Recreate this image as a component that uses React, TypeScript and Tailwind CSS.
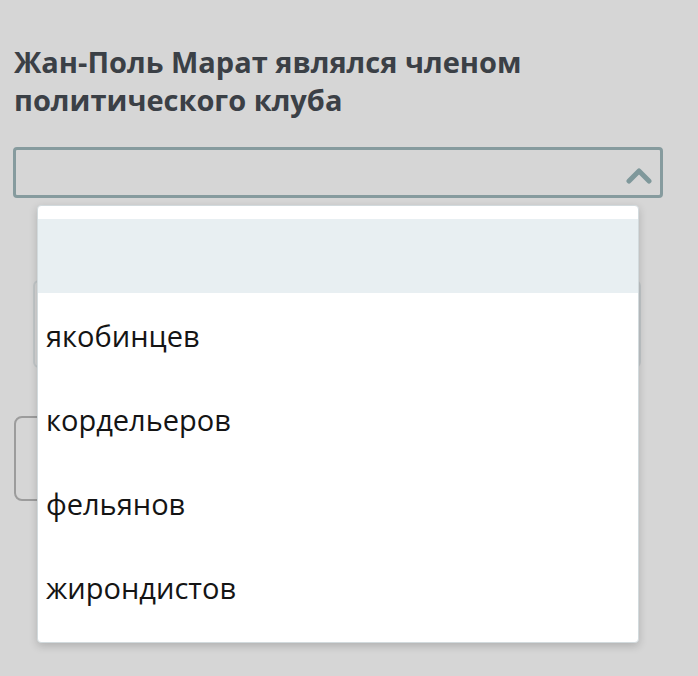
import { useState } from "react";

const OPTIONS = ["", "якобинцев", "кордельеров", "фельянов", "жирондистов"];

function ChevronUp() {
  return (
    <svg width="26" height="18" viewBox="0 0 26 18" className="block">
      <path
        d="M3 15 L13 5 L23 15"
        fill="none"
        stroke="#7f989b"
        strokeWidth="5"
        strokeLinecap="round"
        strokeLinejoin="round"
      />
    </svg>
  );
}

export default function App() {
  const [selected] = useState(0);

  return (
    <div
      className="min-h-[676px] w-[698px] overflow-hidden bg-[#d6d6d6] pl-[14px] pt-[43px]"
      style={{ fontFamily: '"Open Sans", "Noto Sans", sans-serif' }}
    >
      <h1 className="w-[600px] text-[29px] font-bold leading-[38px] text-[#3b4046]">
        Жан-Поль Марат являлся членом политического клуба
      </h1>

      {/* Select with open menu */}
      <div className="relative mt-[28px] w-[650px] -ml-px">
        <div className="flex h-[51px] items-center justify-end rounded-[4px] border-[3px] border-[#869b9e] pr-[8px] pt-[4px]">
          <ChevronUp />
        </div>

        {/* Content under the menu */}
        <div className="ml-[20px] mt-[82px] h-[88px] w-[608px] rounded-[6px] border-2 border-[#c2c7c9]" />
        <div className="ml-px mt-[48px] h-[85px] w-[300px] rounded-[8px] border-2 border-[#9c9c9c]" />

        {/* Dropdown menu */}
        <ul className="absolute left-[24px] top-[58px] z-10 w-[602px] rounded-[4px] border border-[#d2dadd] bg-white py-[13px] text-[29px] text-[#141414] shadow-[0_3px_8px_rgba(0,0,0,0.18)]">
          {OPTIONS.map((option, index) => (
            <li
              key={index}
              className={
                index === selected
                  ? "h-[74px] bg-[#e8eff2] px-[8px]"
                  : "flex h-[84px] items-center px-[8px] pt-[2px]"
              }
            >
              {option}
            </li>
          ))}
        </ul>
      </div>
    </div>
  );
}
